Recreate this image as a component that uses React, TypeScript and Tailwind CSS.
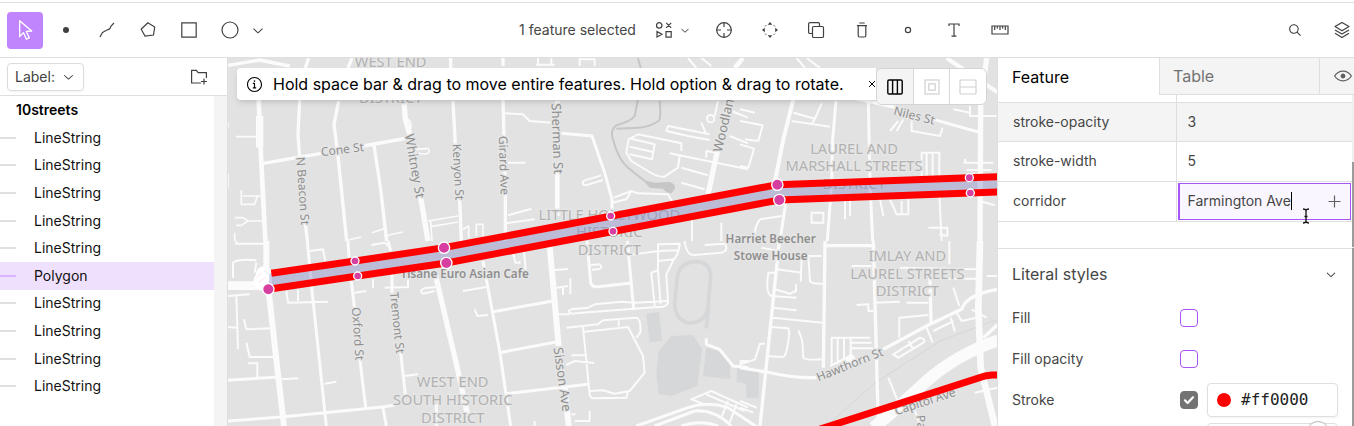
import React from "react";
import {
  RxCursorArrow,
  RxChevronDown,
  RxMagnifyingGlass,
  RxInfoCircled,
  RxEyeOpen,
} from "react-icons/rx";

type Road = { x: number; y: number; w: number; d: string };

/* Street geometry, grouped by map tile (x, y) and line width (w). */
const roads: Road[] = [
  { x: 0, y: 0, w: 14, d: "M92 130L98 280L112 555" },
  { x: 0, y: 0, w: 22, d: "M95 180V275" },
  { x: 0, y: 0, w: 10, d: "M0 28L95 12L185 30M215 130L210 235L215 305M242 6L232 36M232 500L238 555M372 6L360 36M332 135L318 205L330 300L356 555M105 322L280 292M405 270L540 246M668 0V36M675 135L682 265M695 430L700 555M438 268L458 400L476 555" },
  { x: 0, y: 0, w: 16, d: "M528 135L532 190L545 235M578 425L600 555" },
  { x: 0, y: 0, w: 5, d: "M25 242H90M40 402V445H80L88 420H100M45 420H90M20 485H45L60 495H105M60 495L40 508H25M530 190q22 -5 18 30M560 292L595 294q14 -5 5 -17l-35 3M600 495L690 480M608 512L690 498M608 495L612 555M705 520L722 510V545M432 530L468 518M470 540L525 528M360 552L400 543M745 540V505H765V540M0 352V395M0 200V215M20 530V555" },
  { x: 780, y: 0, w: 10, d: "M45 6V30M45 130L52 400V555" },
  { x: 780, y: 0, w: 6, d: "M150 6V30M190 6V30M145 26H200M275 6V30M275 10H320V30M50 172L105 175L125 195L190 200M60 320H112M60 478L130 458M55 502L140 490M600 6L625 36M640 6L670 30" },
  { x: 780, y: 0, w: 14, d: "M208 135V150M208 345V480M765 6L740 36" },
  { x: 780, y: 0, w: 9, d: "M220 232L312 240L350 350L372 430V480" },
  { x: 780, y: 0, w: 6, d: "M345 372L293 388Q278 385 288 374L340 358M580 285V262L450 235L422 250L415 290L430 315L480 345Q510 365 530 362L570 335L575 300M430 248L500 265L492 310L425 295M425 272L495 288M665 235L540 210L535 225L600 240L665 252M545 292L780 340M580 380L650 400M580 335L660 358M690 135L680 180M725 240L780 262M730 165L780 185M655 305V285L690 290M378 425L430 405L450 412L540 415L560 450M372 440L415 430L430 405M612 480V555M700 500V555M640 200L655 235" },
  { x: 780, y: 0, w: 16, d: "M688 285L660 415" },
  { x: 1536, y: 0, w: 12, d: "M160 130L130 250L105 375M620 6L700 60L774 110" },
  { x: 1536, y: 0, w: 9, d: "M288 135L278 250L275 380L262 555M385 135L390 380L398 555M340 126L470 155M580 190L715 228" },
  { x: 1536, y: 0, w: 16, d: "M740 6L722 150L720 555" },
  { x: 1536, y: 0, w: 6, d: "M200 6L240 36M170 6L195 36M160 170L225 188L245 142M155 195L270 212M225 188L215 205M0 195L68 208L55 255L15 250M0 265L42 278L25 335L0 330M0 160L45 170M515 190V225L600 240L608 215M450 225L475 195M490 190L470 225M545 375V290H598V375M560 290V375M578 290V375M760 320H670M755 342H680M675 308V322M700 350V375M640 160L690 170M690 150V180H770M215 470V500H250V470ZM315 430V490M330 430V480M420 430L430 480M450 430L470 475H505V430M485 435V475M598 415L605 555M565 515H622V540L598 535M720 435L765 448M125 480L60 490Q45 510 45 530" },
  { x: 1536, y: 0, w: 9, d: "M137 440L120 555" },
  { x: 0, y: 555, w: 18, d: "M115 0V95M122 150L150 400L168 555" },
  { x: 0, y: 555, w: 26, d: "M0 134H100" },
  { x: 0, y: 555, w: 9, d: "M238 0L250 130L295 555M360 0L363 50M370 120L380 205M395 350L413 500M480 0L488 30M492 100V155M518 335L532 460M0 540L160 528L290 515L470 497L500 492M0 418L150 408M465 500L475 555M625 490V555" },
  { x: 0, y: 555, w: 16, d: "M622 100L690 390L718 520" },
  { x: 0, y: 555, w: 6, d: "M0 165L65 160M0 258L25 260M25 165L30 325M48 235L55 265L130 262M55 305L65 348L135 348M60 367H88V410M160 415L210 412M290 428L325 422M175 150L180 185L300 182M210 145V180M15 110V65Q30 52 85 58M80 95L85 65M25 0V8H110M245 30L285 25L292 60M380 155L415 150M435 115V140M470 140L540 138V115M620 150L585 158Q572 150 588 142L625 138M705 150L775 138M740 205L748 225L780 222M430 12L470 5L480 15M530 405L570 400" },
  { x: 780, y: 555, w: 18, d: "M185 15L212 315M230 440L242 555" },
  { x: 780, y: 555, w: 9, d: "M-15 60L35 330L68 555M10 213L195 180M35 335L205 303M55 458L300 430M297 0L308 125Q312 140 330 137L425 127M418 0L437 205" },
  { x: 780, y: 555, w: 6, d: "M425 42L510 30M500 195L490 95L510 88V10L575 8Q575 35 555 60L535 100L540 185Q535 200 510 198L320 212L250 218Q235 210 250 205L300 200L320 190L400 182L440 185L540 180M510 88L518 190M510 60L560 55M510 30L570 28M200 87L240 84M205 140L240 135M247 112V160M225 140V162M308 72L335 70Q345 78 335 84L312 86M210 220H245M235 260L330 250L345 238L445 230Q460 235 457 275L445 290M392 235V255M285 258L305 460Q305 472 320 472L415 470L420 455M290 272L420 258L465 345L470 395L425 450L380 458L345 448L305 450M250 343H290M235 372L260 360L318 366M250 520H262M260 540H305V510M140 540V555M590 0Q595 45 620 42L700 35Q722 30 712 8L650 12M75 35L82 65H95V60M108 30L115 110M758 373V360H780M650 490L610 475L670 450L780 500M655 460L770 510M720 480L700 530M745 490L725 545" },
  { x: 780, y: 555, w: 9, d: "M655 292V310L695 325L735 375L780 380M445 555L600 500Q660 480 720 500L810 560M500 555L620 510Q680 505 730 555M580 555Q640 535 690 555" },
  { x: 1536, y: 555, w: 10, d: "M118 0L60 555M255 0L250 380M400 0L415 555M250 14H400M0 380L80 393Q160 412 230 410M430 325L570 250L665 205Q680 160 774 145M570 110L573 245M774 250L730 290" },
  { x: 1536, y: 555, w: 20, d: "M720 0L715 200L722 380L765 555" },
  { x: 1536, y: 555, w: 36, d: "M774 298Q650 340 560 420L450 520L400 560" },
  { x: 1536, y: 555, w: 6, d: "M105 95H85Q75 160 95 165L170 170M110 85L185 95M185 55L182 122M245 45H205L210 120Q215 130 250 128M105 145L150 158L168 150V130M100 200L170 208M98 230L250 245M95 258L145 262L148 275Q142 340 130 348L85 346M175 268Q190 300 188 320L190 350Q195 358 245 355M0 370L45 355L60 308H75M275 375V290H390M293 290V370M312 290V360M332 290V340M335 305H395M335 322H400M270 375L330 345M460 340L540 290Q560 295 550 305L475 350ZM505 300L520 325M478 290V230L565 222M500 185H565M350 192L385 190V210H400M400 185L480 182M335 75H395M480 80L715 85M565 113H715M628 0V70M740 105H774M560 260L578 305M580 270L640 240M632 230L645 272M640 140L658 195M650 215L665 240L710 230M695 205L740 230M704 455L774 440M445 410L475 485M520 495L540 555M0 480L50 500M0 500L40 515M65 20L115 30" },
];

type Label = { t: string; x: number; y: number; r?: number; s?: number; k: "street" | "area" | "poi" };

const labels: Label[] = [
  { t: "Cone St", x: 343, y: 280, r: -7, k: "street" },
  { t: "N Beacon St", x: 225, y: 405, r: 86, k: "street" },
  { t: "Whitney St", x: 561, y: 330, r: 80, s: 39, k: "street" },
  { t: "Kenyon St", x: 691, y: 348, r: 87, k: "street" },
  { t: "Girard Ave", x: 828, y: 328, r: 88, k: "street" },
  { t: "Sherman St", x: 988, y: 248, r: 88, s: 39, k: "street" },
  { t: "Woodland St", x: 1494, y: 174, r: -77, s: 39, k: "street" },
  { t: "Niles St", x: 2059, y: 178, r: 14, k: "street" },
  { t: "Oxford St", x: 390, y: 833, r: 86, k: "street" },
  { t: "Tremont St", x: 508, y: 800, r: 84, k: "street" },
  { t: "Sisson Ave", x: 1004, y: 970, r: 82, s: 39, k: "street" },
  { t: "Hawthorn St", x: 1865, y: 925, r: -22, k: "street" },
  { t: "Capitol Ave", x: 2091, y: 1036, r: -18, k: "street" },
  { t: "Park St", x: 2084, y: 1136, r: 84, k: "street" },
  { t: "WEST END", x: 488, y: 18, k: "area" },
  { t: "DISTRICT", x: 488, y: 124, k: "area" },
  { t: "LAUREL AND", x: 1878, y: 277, k: "area" },
  { t: "MARSHALL STREETS", x: 1878, y: 330, k: "area" },
  { t: "DISTRICT", x: 1878, y: 384, k: "area" },
  { t: "LITTLE HOLLYWOOD", x: 1144, y: 475, k: "area" },
  { t: "HISTORIC", x: 1144, y: 528, k: "area" },
  { t: "DISTRICT", x: 1144, y: 582, k: "area" },
  { t: "WEST END", x: 674, y: 977, k: "area" },
  { t: "SOUTH HISTORIC", x: 674, y: 1030, k: "area" },
  { t: "DISTRICT", x: 674, y: 1084, k: "area" },
  { t: "IMLAY AND", x: 2038, y: 598, k: "area" },
  { t: "LAUREL STREETS", x: 2038, y: 652, k: "area" },
  { t: "DISTRICT", x: 2038, y: 705, k: "area" },
  { t: "Tisane Euro Asian Cafe", x: 710, y: 654, k: "poi" },
  { t: "Harriet Beecher", x: 1628, y: 548, k: "poi" },
  { t: "Stowe House", x: 1628, y: 598, k: "poi" },
];

const labelStyle = {
  street: { fill: "#8f8f8f", size: 36, weight: 400 },
  area: { fill: "#b2b2b2", size: 44, weight: 400 },
  poi: { fill: "#8f8f8f", size: 35, weight: 600 },
};

const vertices = [
  [648, 575, 14], [381, 615, 9], [1148, 480, 9], [1648, 386, 14], [2224, 365, 9],
  [121, 700, 14], [389, 660, 9], [655, 621, 14], [1155, 526, 9], [1654, 432, 14], [2227, 411, 9],
];

function StreetMap() {
  return (
    <svg
      className="block size-full bg-[#e2e2e2]"
      viewBox="0 6 2307 1104"
      preserveAspectRatio="xMinYMin slice"
      role="img"
      aria-label="Street map"
    >
      <g fill="#d5d7d9">
        <path d="M1255 773L1293 768L1303 855L1265 858ZM1292 885L1330 840L1395 837L1422 880L1408 990L1330 1020L1292 1015L1285 955ZM1435 875L1470 885L1507 925V970L1425 960ZM1528 933L1592 943V1025H1555V983L1525 977Z" />
        <path d="M1400 617Q1445 615 1448 660L1440 755Q1430 805 1380 800Q1340 790 1340 740L1348 665Q1355 620 1400 617ZM1442 745L1435 817" fill="none" stroke="#d5d7d9" strokeWidth="11" />
      </g>
      <path d="M1796 1110L1936 985L2136 855L2310 790" fill="none" stroke="#d6d6d6" strokeWidth="3" />
      <g fill="none" stroke="#c6c6c6" strokeWidth="6">
        <path d="M1230 6L1238 36M1230 130L1220 180Q1210 195 1165 208Q1145 225 1155 250Q1170 310 1200 335L1250 375M1295 135Q1300 185 1292 195Q1260 215 1230 215L1165 218" />
        <path d="M1245 372L1280 380L1325 378Q1345 385 1340 400L1330 412Q1310 408 1305 398L1265 395Z" fill="#c6c6c6" stroke="none" />
      </g>
      <g fill="none" stroke="#fbfbfb" strokeLinejoin="round">
        {roads.map((r, i) => (
          <path key={i} d={r.d} strokeWidth={r.w} transform={`translate(${r.x} ${r.y})`} />
        ))}
        <circle cx="1448" cy="188" r="11" strokeWidth="6" />
        <path d="M1852 905L1870 890L1882 905V930H1860Z" fill="#fbfbfb" stroke="none" />
      </g>
      <g
        fontFamily="'Noto Sans', 'Open Sans', sans-serif"
        textAnchor="middle"
        stroke="#e6e6e6"
        strokeWidth="8"
        strokeLinejoin="round"
        paintOrder="stroke"
      >
        {labels.map((l, i) => {
          const s = labelStyle[l.k];
          return (
            <text
              key={i}
              dy="0.36em"
              fill={s.fill}
              fontSize={l.s ?? s.size}
              fontWeight={s.weight}
              transform={`translate(${l.x} ${l.y}) rotate(${l.r ?? 0})`}
            >
              {l.t}
            </text>
          );
        })}
      </g>
      <circle cx="104" cy="676" r="28" fill="#fff" />
      <circle cx="108" cy="656" r="25" fill="#fff" />
      <path d="M125 652L648 575L1648 386L2310 362V408L1654 432L655 621L121 700Z" fill="#8585c9" fillOpacity="0.4" />
      <g fill="none" stroke="#ff0000" strokeWidth="21">
        <path d="M130 652L381 615L648 575L1648 386L2224 365L2310 362" />
        <path d="M121 700L389 660L655 621L1654 432L2227 411L2310 408" />
        <path d="M1774 1120L2271 960L2291 957H2310" />
      </g>
      <path d="M86 664l14 -12M92 680l20 -16M108 644l12 8" stroke="#f6d5dc" strokeWidth="2" />
      <g fill="#d63fa0" stroke="#fff" strokeWidth="4">
        {vertices.map(([x, y, r], i) => (
          <circle key={i} cx={x} cy={y} r={r + 3} />
        ))}
      </g>
    </svg>
  );
}

function Icon({ size = 18, children, className = "" }: { size?: number; children: React.ReactNode; className?: string }) {
  return (
    <svg
      width={size}
      height={size}
      viewBox="0 0 18 18"
      fill="none"
      stroke="currentColor"
      strokeWidth="1.2"
      className={className}
      aria-hidden="true"
    >
      {children}
    </svg>
  );
}

function Tool({ label, active, children }: { label: string; active?: boolean; children: React.ReactNode }) {
  return (
    <button
      type="button"
      aria-label={label}
      className={
        active
          ? "flex h-[37px] w-9 items-center justify-center rounded bg-[#c084fc] text-white"
          : "flex h-[37px] w-9 items-center justify-center rounded text-[#404040]"
      }
    >
      {children}
    </button>
  );
}

function Toolbar() {
  return (
    <header className="flex h-[56px] shrink-0 items-center justify-between border-t border-b border-[#dfdfdf] pl-[7px]">
      <div className="flex items-center gap-[5px]">
        <Tool label="Select" active><RxCursorArrow size={20} /></Tool>
        <Tool label="Point"><Icon><circle cx="9" cy="9" r="3" fill="currentColor" stroke="none" /></Icon></Tool>
        <Tool label="Line">
          <Icon><path d="M2 16L3.6 13Q4.3 11.5 5.3 11L9 9Q11 8.6 12 7.4L13 5L16 2" /></Icon>
        </Tool>
        <Tool label="Polygon">
          <Icon><path d="M8.8 1.8L15.7 6L14.5 14L6 15L2.2 8.2Z" /></Icon>
        </Tool>
        <Tool label="Rectangle"><Icon><path d="M1.8 1.8H16.2V16.2H1.8Z" /></Icon></Tool>
        <div className="flex items-center">
          <Tool label="Circle"><Icon><circle cx="9" cy="9" r="8" /></Icon></Tool>
          <button type="button" aria-label="More shapes" className="flex w-5 justify-center text-[#404040]">
            <RxChevronDown size={16} />
          </button>
        </div>
      </div>

      <div className="flex items-center gap-[10px]">
        <span className="text-sm text-[#464646]">1 feature selected</span>
        <div className="mr-2 flex items-center">
          <Tool label="Operations">
            <Icon>
              <circle cx="4.2" cy="4.4" r="2.7" />
              <path d="M11.2 1.9L16.2 6.9M16.2 1.9L11.2 6.9M2 10.6L7 13.3L2 16ZM11 10.6H16.2V16.2H11Z" />
            </Icon>
          </Tool>
          <span className="flex w-[6px] justify-center text-[#404040]">
            <RxChevronDown size={12} className="shrink-0" />
          </span>
        </div>
        <Tool label="Zoom to">
          <Icon><circle cx="9" cy="9" r="7.3" /><path d="M9 1.5V6M9 12V16.5M1.5 9H6M12 9H16.5" /></Icon>
        </Tool>
        <Tool label="Move">
          <Icon>
            <g fill="currentColor" stroke="none">
              <path d="M9 1L11.3 3.8H6.7ZM9 17L11.3 14.2H6.7ZM1 9L3.8 6.7V11.3ZM17 9L14.2 6.7V11.3Z" />
            </g>
            <path d="M4 5.5L5.500 4M12.500 4L14 5.500M14 12.500L12.500 14M5.500 14L4 12.500" strokeWidth="0.8" />
          </Icon>
        </Tool>
        <Tool label="Duplicate">
          <Icon>
            <rect x="5.500" y="5.500" width="11" height="11" rx="1.300" />
            <path d="M5.500 12.500H3Q1.600 12.500 1.600 11.200V3Q1.600 1.600 3 1.600H11.200Q12.500 1.600 12.500 3V5.500" />
          </Icon>
        </Tool>
        <Tool label="Delete">
          <Icon><path d="M6.300 2H11.700M4 4.600H14M5.200 4.600V14.500Q5.200 16 6.600 16H11.400Q12.800 16 12.800 14.500V4.600" /></Icon>
        </Tool>
        <Tool label="Snap"><Icon><circle cx="9" cy="9" r="2.600" /></Icon></Tool>
        <Tool label="Text">
          <Icon><path d="M4 5V3H14V5M9 3V15M6.500 15.200H11.500" /></Icon>
        </Tool>
        <Tool label="Measure">
          <Icon><path d="M1 5H17V13H1ZM3.700 5V9M6.300 5V7.500M9 5V9M11.600 5V7.500M14.300 5V9" /></Icon>
        </Tool>
      </div>

      <div className="flex items-center gap-4 pl-2">
        <Tool label="Search"><RxMagnifyingGlass size={16} /></Tool>
        <button type="button" aria-label="Layers" className="flex h-[37px] w-[25px] items-center justify-center text-[#404040]">
          <Icon>
            <path d="M9 1.500L16 5.600L9 9.700L2 5.600ZM2 9L9 13L16 9M2 12.300L9 16.400L16 12.300" strokeLinejoin="round" />
          </Icon>
        </button>
      </div>
    </header>
  );
}

const features = [
  "LineString", "LineString", "LineString", "LineString", "LineString",
  "Polygon", "LineString", "LineString", "LineString", "LineString",
];

function Sidebar() {
  return (
    <aside className="flex w-[228px] shrink-0 flex-col border-r border-[#dfdfdf]">
      <div className="flex h-[38px] shrink-0 items-center justify-between border-b border-[#dfdfdf] pr-[19px] pl-[7px]">
        <button
          type="button"
          className="flex h-7 items-center gap-[6px] rounded-sm border border-[#dcdcdc] px-[7px] text-sm text-[#404040] shadow-xs"
        >
          Label:
          <RxChevronDown size={15} />
        </button>
        <button type="button" aria-label="New folder" className="text-[#404040]">
          <Icon>
            <path d="M11 15H1.600V2.300H6.200L8.200 4.600H16.400V10M14 10.500V16.500M11 13.500H17" />
          </Icon>
        </button>
      </div>
      <div className="flex min-h-0 flex-1 bg-[#f4f4f4] pr-[13px]">
        <div className="flex-1 bg-white">
          <h2 className="pl-4 text-sm leading-7 font-semibold text-black">10streets</h2>
          <ul className="grid h-[276px] auto-rows-fr">
            {features.map((f, i) => (
              <li
                key={i}
                className={
                  f === "Polygon"
                    ? "flex items-center gap-[18px] bg-[#efe0fe] text-sm text-[#111]"
                    : "flex items-center gap-[18px] text-sm text-[#111]"
                }
              >
                <span className={f === "Polygon" ? "h-[2px] w-4 bg-[#d8b4fe]" : "h-[2px] w-4 bg-[#e0e0e0]"} />
                {f}
              </li>
            ))}
          </ul>
        </div>
      </div>
    </aside>
  );
}

function MapOverlay() {
  return (
    <div className="absolute top-[10px] right-[10px] left-[9px] flex items-start">
      <div className="flex h-8 min-w-0 flex-1 items-center rounded-l-sm bg-white pl-[9px] text-black shadow-md">
        <RxInfoCircled size={17} className="shrink-0" />
        <p className="ml-[10px] flex-1 truncate text-base">
          Hold space bar &amp; drag to move entire features. Hold option &amp; drag to rotate.
        </p>
        <button type="button" aria-label="Dismiss" className="flex w-[9px] shrink-0 justify-center">
          <svg width="8" height="8" viewBox="0 0 8 8" stroke="currentColor" strokeWidth="1" aria-hidden="true">
            <path d="M1 1L7 7M7 1L1 7" />
          </svg>
        </button>
      </div>
      <div className="flex h-[37px] shrink-0 divide-x divide-[#d8d8d8] overflow-hidden rounded-md border border-[#d4d4d4] bg-white">
        <button type="button" aria-label="Columns" className="flex w-[37px] items-center justify-center bg-[#f4f4f4] text-black">
          <Icon><rect x="1.800" y="2" width="14.400" height="14" rx="1.300" strokeWidth="1.400" /><path d="M6.600 2V16M11.400 2V16" strokeWidth="1.400" /></Icon>
        </button>
        <button type="button" aria-label="Floating" className="flex w-9 items-center justify-center text-[#d0d0d0]">
          <Icon><rect x="2" y="2" width="14" height="14" /><rect x="5.800" y="5.800" width="6.400" height="6.400" /></Icon>
        </button>
        <button type="button" aria-label="Rows" className="flex w-9 items-center justify-center text-[#d0d0d0]">
          <Icon><rect x="1" y="2" width="16" height="14" rx="1" /><path d="M1 9H17" /></Icon>
        </button>
      </div>
    </div>
  );
}

function StyleRow({ id, label, checked, children }: { id: string; label: string; checked?: boolean; children?: React.ReactNode }) {
  return (
    <div className="flex h-[41px] items-center">
      <label htmlFor={id} className="w-[168px] shrink-0 text-sm text-[#464646]">{label}</label>
      <span className="relative flex size-[18px] shrink-0">
        <input
          id={id}
          type="checkbox"
          defaultChecked={checked}
          className="peer size-[18px] appearance-none rounded border border-[#a855f7] bg-white checked:border-[#737373] checked:bg-[#737373]"
        />
        <svg
          className="pointer-events-none absolute inset-0 hidden size-[18px] peer-checked:block"
          viewBox="0 0 18 18"
          fill="none"
          stroke="#fff"
          strokeWidth="2.200"
          strokeLinecap="round"
          strokeLinejoin="round"
          aria-hidden="true"
        >
          <path d="M5 9.300L7.600 12L13 6.300" />
        </svg>
      </span>
      {children}
    </div>
  );
}

function Inspector() {
  return (
    <aside className="flex w-[357px] shrink-0 flex-col border-l border-[#dfdfdf] bg-white">
      <div className="flex h-[37px] shrink-0" role="tablist">
        <button type="button" role="tab" aria-selected="true" className="w-[161px] pl-[14px] text-left text-base text-black">
          Feature
        </button>
        <button
          type="button"
          role="tab"
          aria-selected="false"
          className="flex-1 border-b border-l border-[#dfdfdf] bg-[#f4f4f4] pl-[13px] text-left text-base text-[#737373]"
        >
          Table
        </button>
        <button
          type="button"
          aria-label="Preview"
          className="flex w-[35px] items-center justify-end border-b border-l border-[#dfdfdf] bg-[#f4f4f4] pr-[2px] text-[#606060]"
        >
          <RxEyeOpen size={18} />
        </button>
      </div>

      <div className="flex min-h-0 flex-1 overflow-hidden">
        <div className="min-w-0 flex-1">
          <table className="w-full table-fixed border-collapse text-sm text-[#464646]">
            <colgroup>
              <col className="w-[178px]" />
              <col />
            </colgroup>
            <tbody>
              <tr className="h-[7px] border-b border-[#dfdfdf]">
                <td className="border-r border-[#dfdfdf]" />
                <td />
              </tr>
              <tr className="h-[39px] border-b border-[#dfdfdf] bg-[#f4f4f4]">
                <th scope="row" className="border-r border-[#dfdfdf] pl-[15px] text-left font-normal">stroke-opacity</th>
                <td className="pl-[11px]">3</td>
              </tr>
              <tr className="h-10 border-b border-[#dfdfdf]">
                <th scope="row" className="border-r border-[#dfdfdf] pl-[15px] text-left font-normal">stroke-width</th>
                <td className="pl-[11px]">5</td>
              </tr>
              <tr className="h-10 border-b border-[#dfdfdf]">
                <th scope="row" className="border-r border-[#dfdfdf] pl-[15px] text-left font-normal">
                  <label htmlFor="corridor">corridor</label>
                </th>
                <td className="p-px">
                  <div className="relative flex h-[37px] items-center border border-l-2 border-[#a855f7] bg-[#faf6ff] pr-[9px] pl-2">
                    <input
                      id="corridor"
                      type="text"
                      defaultValue="Farmington Ave"
                      className="min-w-0 flex-1 bg-transparent outline-none"
                    />
                    <span className="absolute top-2 left-[111px] h-[18px] w-px bg-black" />
                    <button type="button" aria-label="Add value" className="text-[#606060]">
                      <svg width="13" height="13" viewBox="0 0 13 13" stroke="currentColor" strokeWidth="1.200" aria-hidden="true">
                        <path d="M6.500 0.500V12.500M0.500 6.500H12.500" />
                      </svg>
                    </button>
                    <svg
                      className="absolute top-6 left-[121px]"
                      width="10"
                      height="16"
                      viewBox="0 0 10 16"
                      fill="none"
                      stroke="#111"
                      strokeWidth="1.300"
                      aria-hidden="true"
                    >
                      <path d="M2 1Q4.500 1 5 2.500Q5.500 1 8 1M5 2.500V13.500M2 15Q4.500 15 5 13.500Q5.500 15 8 15M3.500 8.500H6.500" />
                    </svg>
                  </div>
                </td>
              </tr>
            </tbody>
          </table>

          <section className="mt-[26px] border-t border-[#dfdfdf] px-[14px] pt-[2px]">
            <button type="button" className="flex h-[47px] w-full items-center justify-between text-base text-[#464646]">
              Literal styles
              <RxChevronDown size={14} />
            </button>
            <StyleRow id="fill" label="Fill" />
            <StyleRow id="fill-opacity" label="Fill opacity" />
            <StyleRow id="stroke" label="Stroke" checked>
              <div className="ml-[9px] flex h-[34px] min-w-0 flex-1 items-center gap-[10px] rounded border border-[#dfdfdf] pl-[9px] shadow-xs">
                <span className="size-[14px] shrink-0 rounded-full bg-[#ff0000]" />
                <input
                  type="text"
                  aria-label="Stroke color"
                  defaultValue="#ff0000"
                  className="min-w-0 flex-1 bg-transparent font-['DejaVu_Sans_Mono',monospace] text-base text-[#222] outline-none"
                />
              </div>
            </StyleRow>
            <div className="mt-[2px] flex justify-end">
              <div className="flex h-8 w-[131px] justify-end rounded border border-[#dfdfdf] pr-2">
                <span className="-mt-[3px] size-[22px] rounded-full border border-[#bbb] bg-white shadow-sm" />
              </div>
            </div>
          </section>
        </div>
        <div className="flex w-[2px] flex-col bg-[#f0f0f0] pt-[67px]">
          <span className="h-[85px] bg-[#9b9b9b]" />
          <span className="mt-px flex-1 bg-[#9b9b9b]" />
        </div>
      </div>
    </aside>
  );
}

export default function App() {
  return (
    <div className="flex h-screen flex-col overflow-hidden bg-white pt-[2px] font-['Inter',sans-serif]">
      <Toolbar />
      <div className="flex min-h-0 flex-1">
        <Sidebar />
        <main className="relative min-w-0 flex-1 overflow-hidden">
          <StreetMap />
          <MapOverlay />
        </main>
        <Inspector />
      </div>
    </div>
  );
}
